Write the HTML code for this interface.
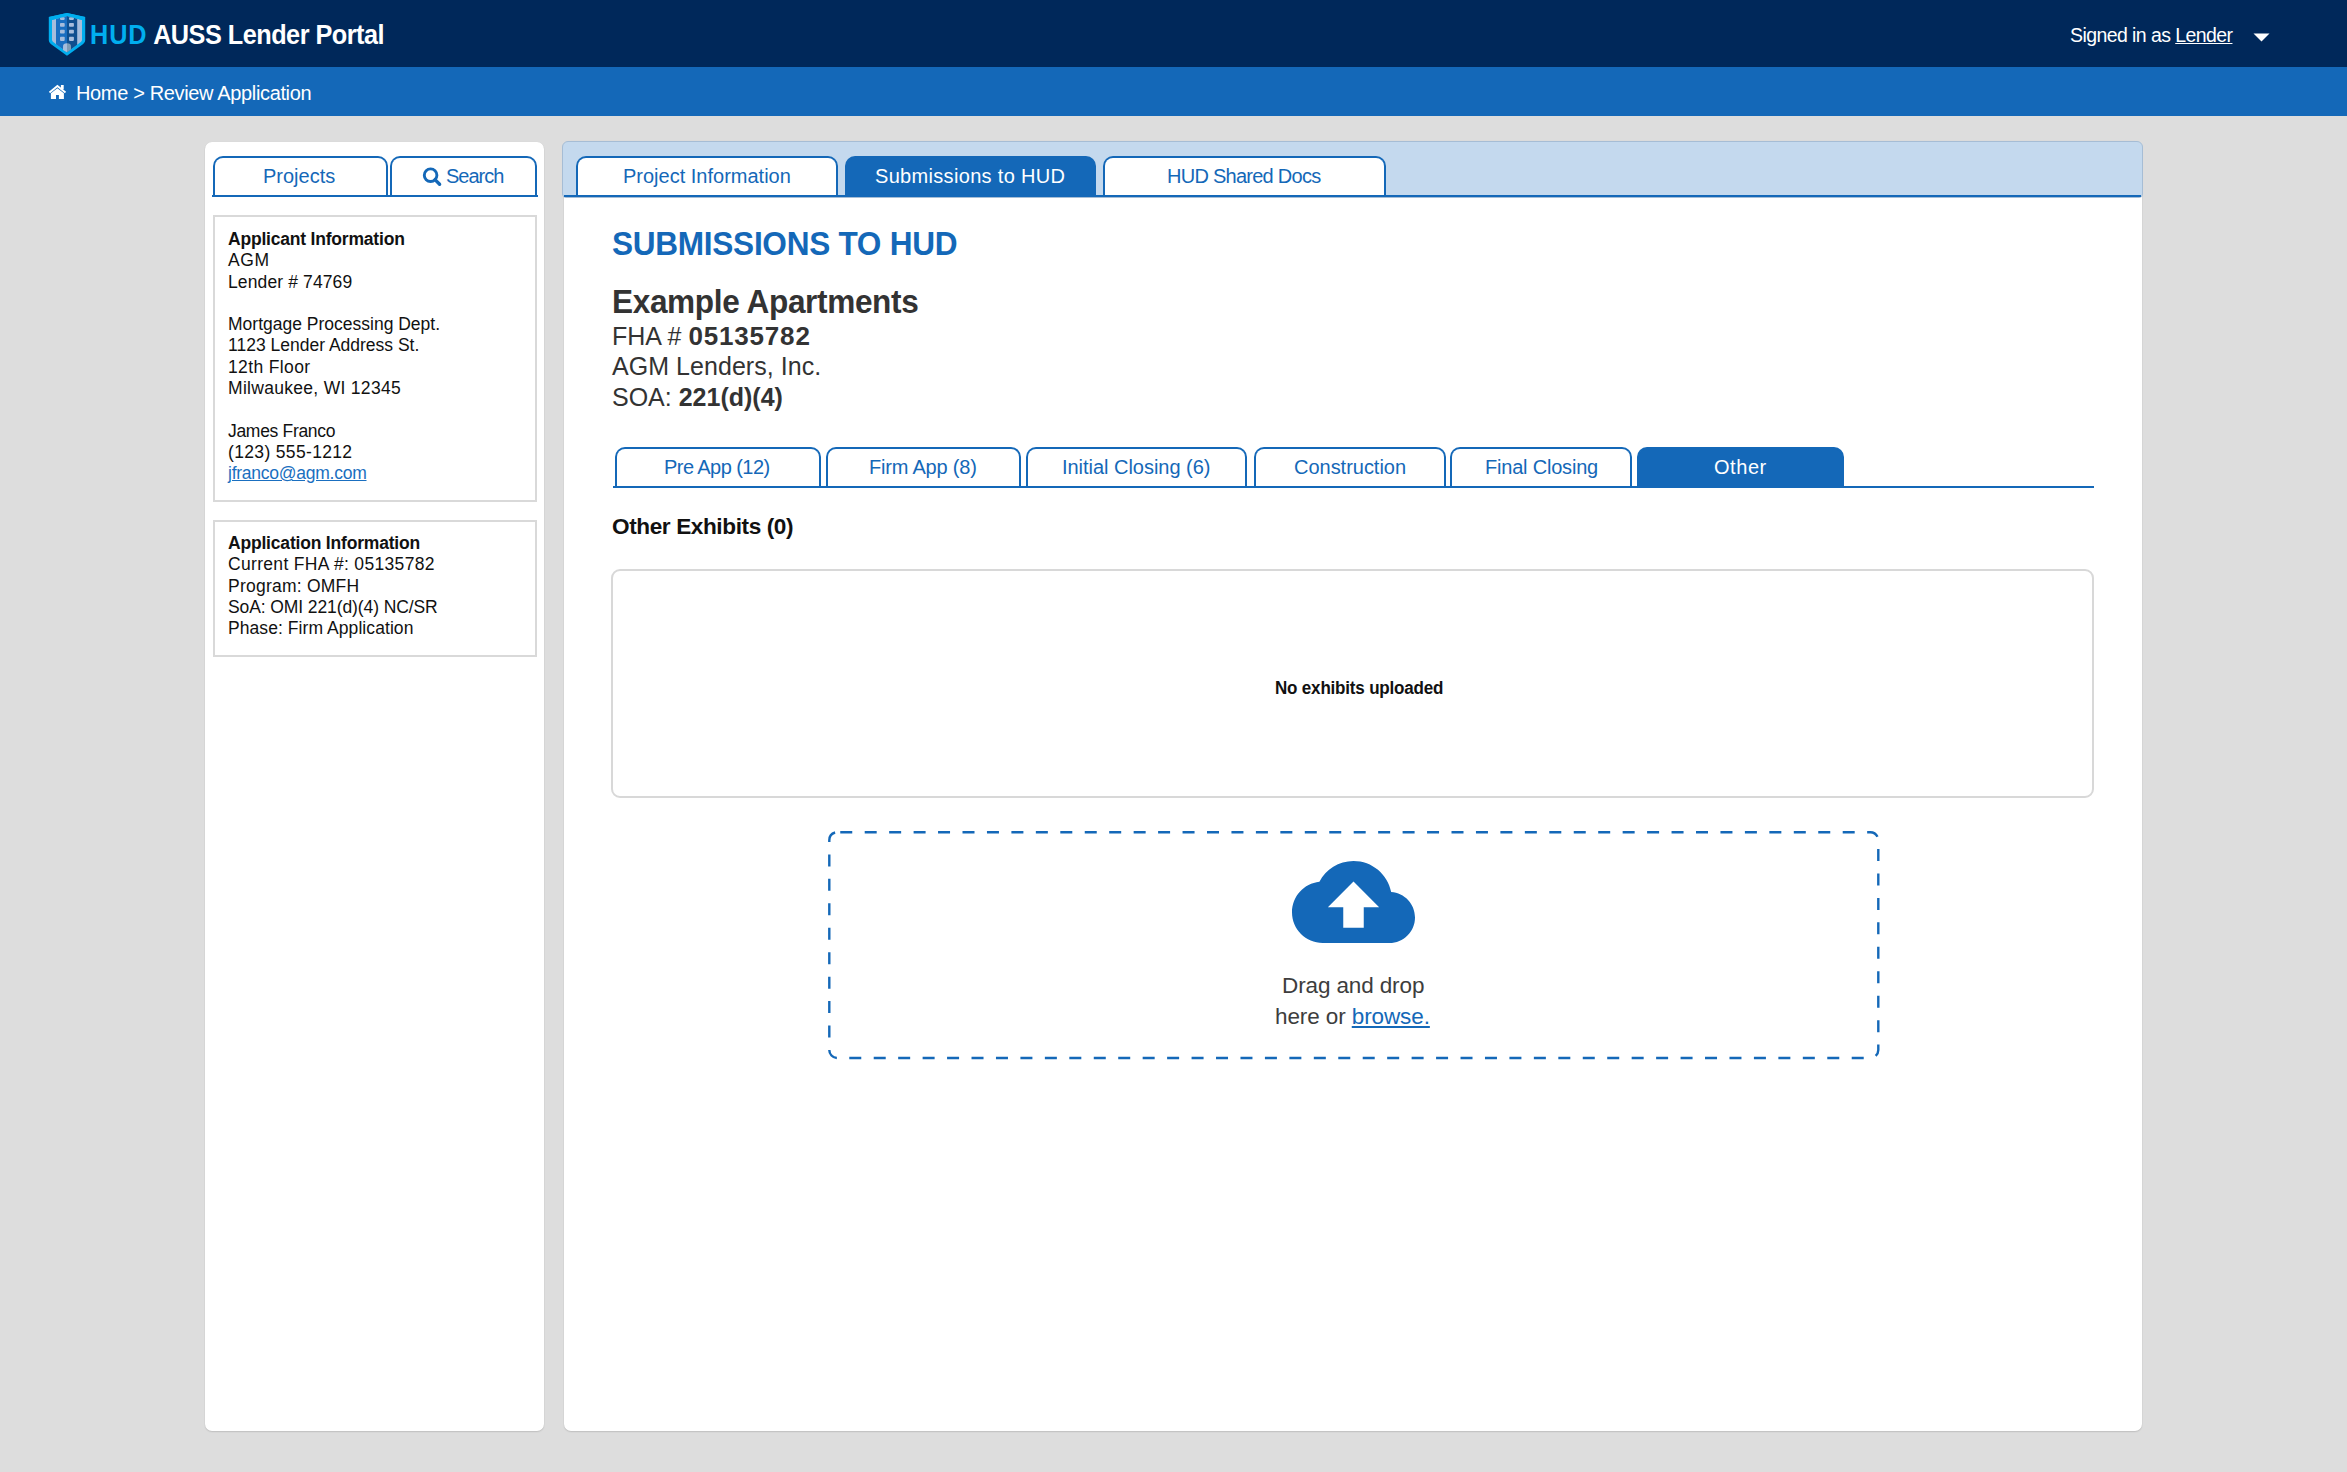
<!DOCTYPE html>
<html>
<head>
<meta charset="utf-8">
<style>
html,body{margin:0;padding:0;}
body{width:2347px;height:1472px;overflow:hidden;background:#dddddd;position:relative;font-family:"Liberation Sans",sans-serif;}
.a{position:absolute;white-space:nowrap;}
.t{position:absolute;white-space:nowrap;line-height:1;}
#hdr{left:0;top:0;width:2347px;height:67px;background:#00285a;}
#crumb{left:0;top:67px;width:2347px;height:49px;background:#1468b8;}
.card{position:absolute;background:#fff;border-radius:7px;box-shadow:0 1px 1.5px rgba(0,0,0,0.13),0 0 1px rgba(0,0,0,0.08);}
.tab{position:absolute;box-sizing:border-box;border:2px solid #1468b8;border-bottom:none;border-radius:10px 10px 0 0;background:#fff;}
.tab.on{background:#1468b8;}
.tt{color:#1468b8;font-size:20px;}
.side{font-size:17.5px;color:#111;}
.ibox{position:absolute;box-sizing:border-box;border:2px solid #d9d9d9;background:#fff;}
</style>
</head>
<body>
<!-- header -->
<div id="hdr" class="a"></div>
<svg class="a" style="left:48px;top:12px" width="38" height="45" viewBox="48 12 38 45">
  <path d="M67 13 L48.8 16.9 L48.8 40.2 Q48.8 42.6 50.8 44 L67 55.8 L83.2 44 Q85.2 42.6 85.2 40.2 L85.2 16.9 Z" fill="#00aeef"/>
  <path d="M67 16.1 L52 19.9 L52 39.8 Q52 41.2 53.2 42.1 L67 52.3 L80.8 42.1 Q82 41.2 82 39.8 L82 19.9 Z" fill="#a6bddc"/>
  <path d="M56 18.9 L67 16.1 L67 52.3 L56 44.3 Z" fill="#1a6ec0"/>
  <path d="M67 16.1 L77.2 18.7 L77.2 44.7 L67 52.3 Z" fill="#0f4f8f"/>
  <g fill="#a6bddc">
    <rect x="60" y="17.2" width="4.7" height="2.7" rx="0.8"/>
    <rect x="69" y="17.2" width="4.9" height="2.7" rx="0.8"/>
    <rect x="60" y="23" width="4.7" height="3.8" rx="0.8"/>
    <rect x="69" y="23" width="4.9" height="3.8" rx="0.8"/>
    <rect x="60" y="29.7" width="4.7" height="3.9" rx="0.8"/>
    <rect x="69" y="29.7" width="4.9" height="3.9" rx="0.8"/>
    <rect x="60" y="36.8" width="4.7" height="4.1" rx="0.8"/>
    <rect x="69" y="36.8" width="4.9" height="4.1" rx="0.8"/>
  </g>
  <path d="M67 16.1 L52 19.9 L48.8 16.9 L67 13 Z" fill="#00aeef"/>
  <path d="M67 16.1 L82 19.9 L85.2 16.9 L67 13 Z" fill="#00aeef"/>
  <path d="M63 50 L63 46.5 Q63 43.2 67 43.2 L67 52.3 Z" fill="#a6bddc"/>
  <path d="M67 43.2 Q71 43.2 71 46.5 L71 49.4 L67 52.3 Z" fill="#7f9cb5"/>
</svg>
<div class="t" style="left:90px;top:22px;font-size:27px;font-weight:bold;letter-spacing:-0.55px;color:#fff;transform:scaleX(0.936);transform-origin:0 0"><span style="color:#00aeef;letter-spacing:1px">HUD</span> AUSS Lender Portal</div>
<div class="t" style="left:2070px;top:26px;font-size:19.5px;color:#fff;letter-spacing:-0.58px">Signed in as <span style="text-decoration:underline">Lender</span></div>
<svg class="a" style="left:2253px;top:33px" width="17" height="9" viewBox="0 0 17 9"><path d="M0.5 0.5 L16.5 0.5 L8.5 8.5 Z" fill="#fff"/></svg>

<!-- breadcrumb -->
<div id="crumb" class="a"></div>
<svg class="a" style="left:48px;top:83px" width="20" height="17" viewBox="48 83 20 17">
  <path d="M49.5 92.6 L57.4 86 L65.5 92.6" fill="none" stroke="#fff" stroke-width="1.9"/>
  <rect x="60.9" y="85" width="2.8" height="4.3" fill="#fff"/>
  <path d="M50.9 93.2 L57.4 88.2 L63.9 93.2 L63.9 99 L58.9 99 L58.9 95 L56 95 L56 99 L50.9 99 Z" fill="#fff"/>
</svg>
<div class="t" style="left:76px;top:83px;font-size:20px;color:#fff;letter-spacing:-0.35px">Home &gt; Review Application</div>

<!-- left card -->
<div class="card" style="left:205px;top:142px;width:339px;height:1289px"></div>
<div class="tab" style="left:213px;top:156px;width:175px;height:40px"></div>
<div class="tab" style="left:390px;top:156px;width:147px;height:40px"></div>
<div class="a" style="left:212px;top:195px;width:326px;height:2px;background:#1468b8"></div>
<div class="t tt" style="left:263px;top:166px">Projects</div>
<svg class="a" style="left:420px;top:165px" width="24" height="24" viewBox="420 165 24 24"><circle cx="430.6" cy="175.2" r="6.3" fill="none" stroke="#1468b8" stroke-width="2.9"/><path d="M435 179.6 L439.6 184.2" stroke="#1468b8" stroke-width="3.4" stroke-linecap="round"/></svg>
<div class="t tt" style="left:446px;top:166px;letter-spacing:-1px">Search</div>

<div class="ibox" style="left:213px;top:215px;width:324px;height:287px"></div>
<div class="a side" style="left:228px;top:229px;line-height:21.3px">
<b style="letter-spacing:-0.2px">Applicant Information</b><br><span style="letter-spacing:0.6px">AGM</span><br><span style="letter-spacing:0.12px">Lender # 74769</span><br><br>Mortgage Processing Dept.<br>1123 Lender Address St.<br><span style="letter-spacing:0.37px">12th Floor</span><br><span style="letter-spacing:0.3px">Milwaukee, WI 12345</span><br><br><span style="letter-spacing:-0.31px">James Franco</span><br><span style="letter-spacing:0.34px">(123) 555-1212</span><br><span style="color:#1a6fc0;text-decoration:underline;letter-spacing:-0.25px">jfranco@agm.com</span>
</div>
<div class="ibox" style="left:213px;top:520px;width:324px;height:137px"></div>
<div class="a side" style="left:228px;top:533px;line-height:21.3px">
<b style="letter-spacing:-0.19px">Application Information</b><br><span style="letter-spacing:0.32px">Current FHA #: 05135782</span><br><span style="letter-spacing:0.23px">Program: OMFH</span><br><span style="letter-spacing:-0.1px">SoA: OMI 221(d)(4) NC/SR</span><br><span style="letter-spacing:0.07px">Phase: Firm Application</span>
</div>

<!-- right card -->
<div class="card" style="left:564px;top:141px;width:1578px;height:1289.5px"></div>
<div class="a" style="left:562px;top:140.5px;width:1581px;height:57px;box-sizing:border-box;background:#c4d9ee;border:1.5px solid #a6bdd5;border-radius:6px 6px 4px 4px"></div>
<div class="tab" style="left:576px;top:156px;width:262px;height:40px"></div>
<div class="tab on" style="left:845px;top:156px;width:251px;height:40px"></div>
<div class="tab" style="left:1103px;top:156px;width:283px;height:40px"></div>
<div class="a" style="left:564px;top:195px;width:1577px;height:2px;background:#1468b8"></div>
<div class="t tt" style="left:623px;top:166px">Project Information</div>
<div class="t tt" style="left:875px;top:166px;color:#fff;letter-spacing:0.32px">Submissions to HUD</div>
<div class="t tt" style="left:1167px;top:166px;letter-spacing:-0.74px">HUD Shared Docs</div>

<div class="t" style="left:612px;top:227px;font-size:33px;font-weight:bold;color:#1468b8;letter-spacing:-0.3px;transform:scaleX(0.957);transform-origin:0 0">SUBMISSIONS TO HUD</div>
<div class="t" style="left:612px;top:284px;font-size:34px;font-weight:bold;color:#333;letter-spacing:-0.4px;transform:scaleX(0.929);transform-origin:0 0">Example Apartments</div>
<div class="t" style="left:612px;top:323px;font-size:25px;color:#333">FHA # <b style="letter-spacing:0.82px;font-size:26px">05135782</b></div>
<div class="t" style="left:612px;top:354px;font-size:25px;color:#333;letter-spacing:0.05px">AGM Lenders, Inc.</div>
<div class="t" style="left:612px;top:385px;font-size:25px;color:#333">SOA: <b>221(d)(4)</b></div>

<!-- sub tabs -->
<div class="tab" style="left:615px;top:447px;width:206px;height:40px"></div>
<div class="tab" style="left:826px;top:447px;width:195px;height:40px"></div>
<div class="tab" style="left:1026px;top:447px;width:221px;height:40px"></div>
<div class="tab" style="left:1254px;top:447px;width:192px;height:40px"></div>
<div class="tab" style="left:1450px;top:447px;width:182px;height:40px"></div>
<div class="tab on" style="left:1637px;top:447px;width:207px;height:41px"></div>
<div class="a" style="left:613px;top:486px;width:1481px;height:2px;background:#1468b8"></div>
<div class="t tt" style="left:664px;top:457px;letter-spacing:-0.56px">Pre App (12)</div>
<div class="t tt" style="left:869px;top:457px;letter-spacing:-0.2px">Firm App (8)</div>
<div class="t tt" style="left:1062px;top:457px;letter-spacing:-0.03px">Initial Closing (6)</div>
<div class="t tt" style="left:1294px;top:457px;letter-spacing:-0.02px">Construction</div>
<div class="t tt" style="left:1485px;top:457px;letter-spacing:-0.2px">Final Closing</div>
<div class="t tt" style="left:1714px;top:457px;color:#fff;letter-spacing:0.55px">Other</div>

<div class="t" style="left:612px;top:516px;font-size:22.6px;font-weight:bold;color:#111;letter-spacing:-0.4px">Other Exhibits (0)</div>
<div class="a" style="left:611px;top:569px;width:1483px;height:229px;box-sizing:border-box;border:2px solid #d8d8d8;border-radius:9px"></div>
<div class="t" style="left:1275px;top:679px;font-size:18px;font-weight:bold;color:#111;letter-spacing:-0.2px;transform:scaleX(0.945);transform-origin:0 0">No exhibits uploaded</div>

<!-- dropzone -->
<svg class="a" style="left:0;top:0" width="2347" height="1472" viewBox="0 0 2347 1472"><rect x="829.3" y="832.2" width="1049" height="225.8" rx="8" ry="8" fill="none" stroke="#1468b8" stroke-width="2.4" stroke-dasharray="12 12.45" stroke-dashoffset="21.5"/></svg>
<svg class="a" style="left:1292px;top:861px" width="123" height="82" viewBox="0 4 24 16"><path d="M19.35 10.04C18.67 6.59 15.64 4 12 4 9.11 4 6.6 5.64 5.35 8.04 2.34 8.36 0 10.91 0 14c0 3.31 2.69 6 6 6h13c2.76 0 5-2.24 5-5 0-2.64-2.05-4.78-4.65-4.96zM14 13v4h-4v-4H7l5-5 5 5h-3z" fill="#1468b8"/></svg>
<div class="t" style="left:1282px;top:975px;font-size:22.5px;color:#3d3d3d;letter-spacing:-0.12px">Drag and drop</div>
<div class="t" style="left:1275px;top:1006px;font-size:22.5px;color:#3d3d3d;letter-spacing:-0.1px">here or <span style="color:#1468b8;text-decoration:underline">browse.</span></div>
</body>
</html>
